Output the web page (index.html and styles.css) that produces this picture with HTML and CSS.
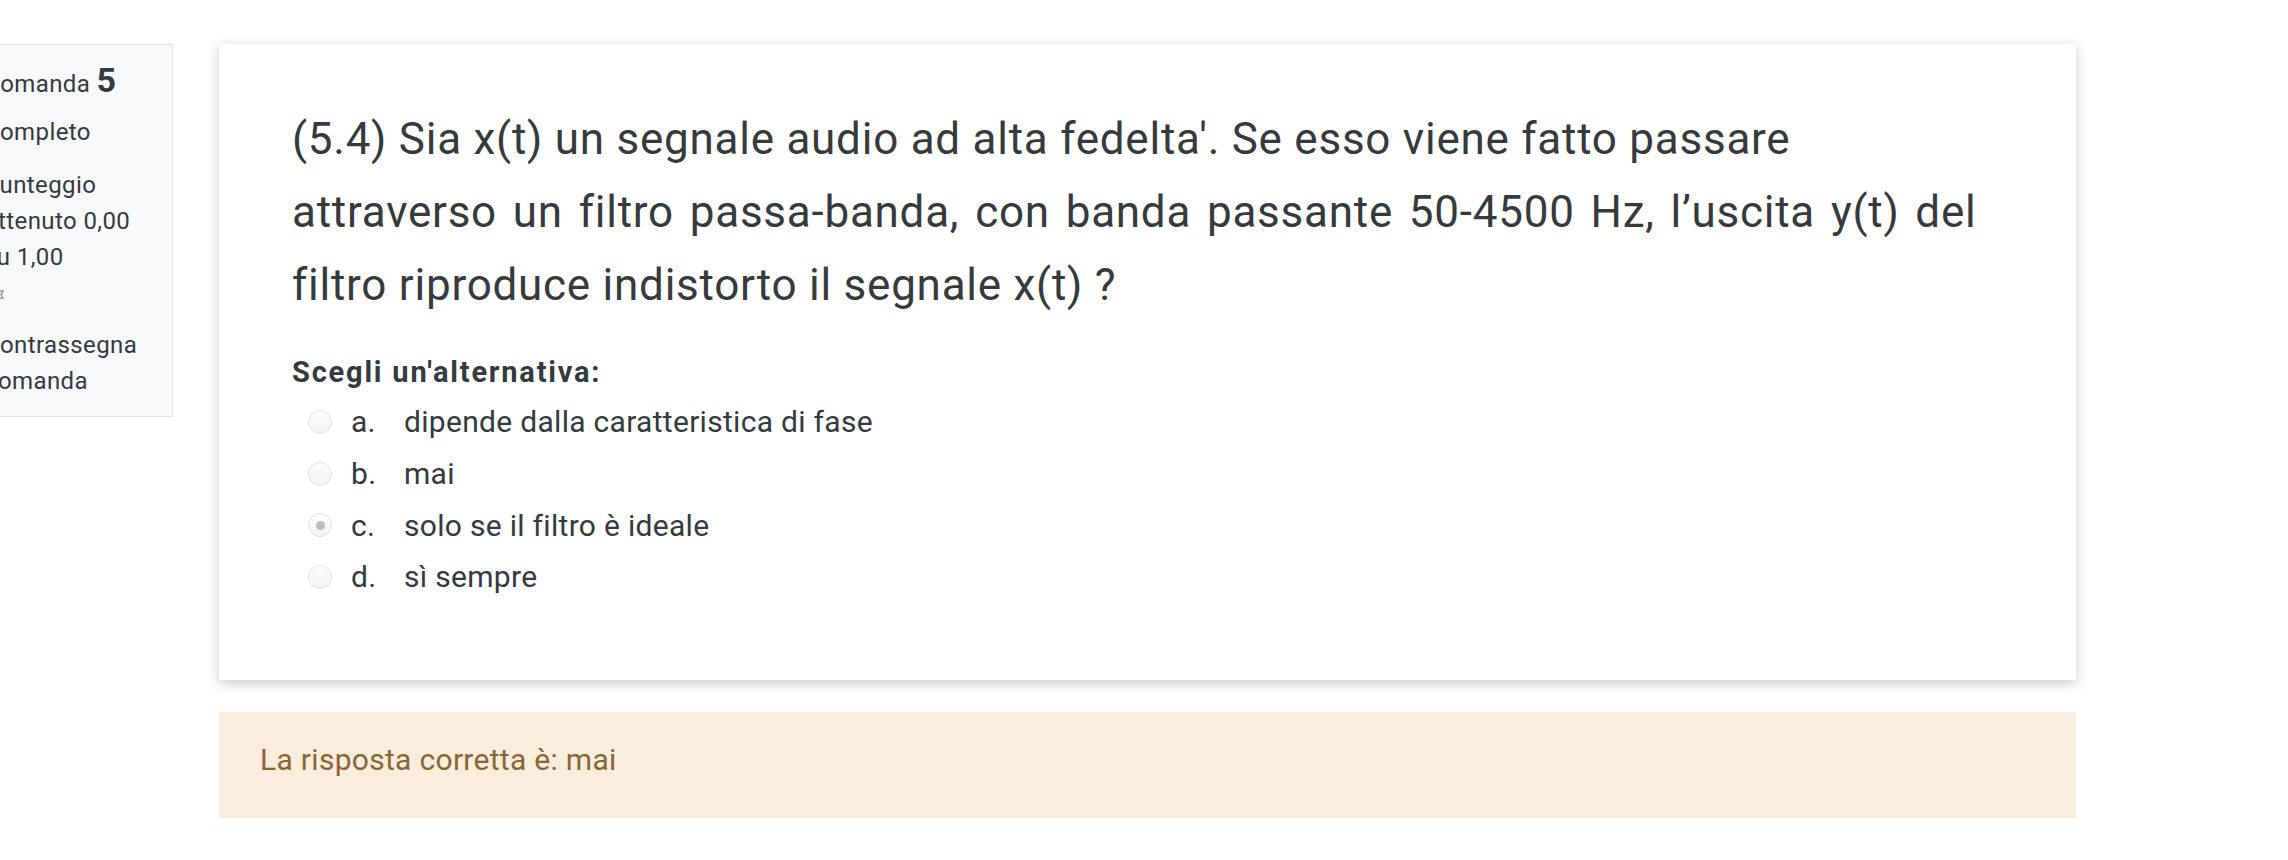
FILE: index.html
```html
<!DOCTYPE html>
<html lang="it">
<head>
<meta charset="utf-8">
<title>Domanda 5</title>
<link rel="stylesheet" href="styles.css">
</head>
<body>
<div class="page">
  <aside class="info">
    <h3 class="qno">Domanda <span class="num">5</span></h3>
    <div class="state">Completo</div>
    <div class="grade">Punteggio ottenuto 0,00 su 1,00</div>
    <div class="flagrow"><svg class="flagicon" width="18" height="18" viewBox="0 0 18 18"><path d="M3 2v15M3 3h10l-2 3.5 2 3.5H3" fill="none" stroke="#999" stroke-width="1.4"/></svg></div>
    <div class="flagtext">Contrassegna domanda</div>
  </aside>
  <main class="content">
    <section class="formulation">
      <div class="qtext">(5.4) Sia x(t) un segnale audio ad alta fedelta'. Se esso viene fatto passare<br><span class="wide">attraverso un filtro passa-banda, con banda passante 50-4500 Hz, l’uscita y(t) del</span><br>filtro riproduce indistorto il segnale x(t) ?</div>
      <div class="ablock">
        <div class="prompt">Scegli un'alternativa:</div>
        <div class="answer">
          <label class="opt"><input type="radio" disabled><span class="letter">a.</span><span class="txt">dipende dalla caratteristica di fase</span></label>
          <label class="opt"><input type="radio" disabled><span class="letter">b.</span><span class="txt">mai</span></label>
          <label class="opt"><input type="radio" disabled checked><span class="letter">c.</span><span class="txt">solo se il filtro è ideale</span></label>
          <label class="opt"><input type="radio" disabled><span class="letter">d.</span><span class="txt">sì sempre</span></label>
        </div>
      </div>
    </section>
    <section class="outcome">La risposta corretta è: mai</section>
  </main>
</div>
</body>
</html>
```
FILE: styles.css
```css
html, body {
  margin: 0;
  padding: 0;
  background: #ffffff;
}
body {
  font-family: Roboto, "Liberation Sans", sans-serif;
  color: #343a40;
  overflow: hidden;
}
.page {
  display: flex;
  align-items: flex-start;
  padding-top: 44px;
}
.info {
  flex: 0 0 auto;
  box-sizing: border-box;
  width: 202px;
  margin-left: -29px;
  padding: 15px 28px 17px 12px;
  background: #f8f9fa;
  border: 1px solid #dee2e6;
  font-size: 24px;
  line-height: 36px;
  letter-spacing: 0.4px;
  color: #343a40;
}
.qno {
  margin: 0;
  font-size: 24px;
  font-weight: 400;
  line-height: 40px;
}
.qno .num {
  font-size: 34px;
  font-weight: 700;
}
.state {
  margin-top: 10px;
}
.grade {
  margin-top: 17px;
}
.flagrow {
  margin-top: 4px;
  height: 36px;
  display: flex;
  align-items: center;
}
.flagicon {
  margin-left: 6px;
}
.flagtext {
  margin-top: 12px;
}
.content {
  flex: 0 0 auto;
  width: 1857px;
  margin-left: 46px;
}
.formulation {
  background: #ffffff;
  box-shadow: 0 3px 12px rgba(0, 0, 0, 0.22);
  padding: 59px 40px 77px 73px;
}
.qtext {
  font-size: 44px;
  line-height: 73px;
  letter-spacing: 0.75px;
  white-space: nowrap;
  color: #373a3c;
}
.qtext .wide {
  word-spacing: 4.2px;
}
.ablock {
  margin-top: 29px;
}
.prompt {
  font-size: 29px;
  font-weight: 700;
  line-height: 42px;
  letter-spacing: 1.8px;
}
.answer {
  margin-top: 3px;
  display: flex;
  flex-direction: column;
}
.opt {
  display: flex;
  align-items: center;
  height: 51.7px;
  font-size: 30px;
  letter-spacing: 0.3px;
}
.opt input {
  appearance: none;
  -webkit-appearance: none;
  margin: 0 0 0 16px;
  width: 24px;
  height: 24px;
  border-radius: 50%;
  border: 1px solid #e2e2e2;
  background: linear-gradient(#fdfdfd, #f3f3f3);
  box-sizing: border-box;
  display: flex;
  align-items: center;
  justify-content: center;
  flex: 0 0 auto;
}
.opt input:checked::after {
  content: "";
  width: 9px;
  height: 9px;
  border-radius: 50%;
  background: #bdbdbd;
}
.letter {
  display: inline-block;
  width: 53px;
  margin-left: 19px;
}
.outcome {
  margin-top: 32px;
  background: #faeddd;
  color: #8a6634;
  font-size: 30px;
  line-height: 45px;
  letter-spacing: 0.3px;
  padding: 25px 41px 36px 41px;
}
```
